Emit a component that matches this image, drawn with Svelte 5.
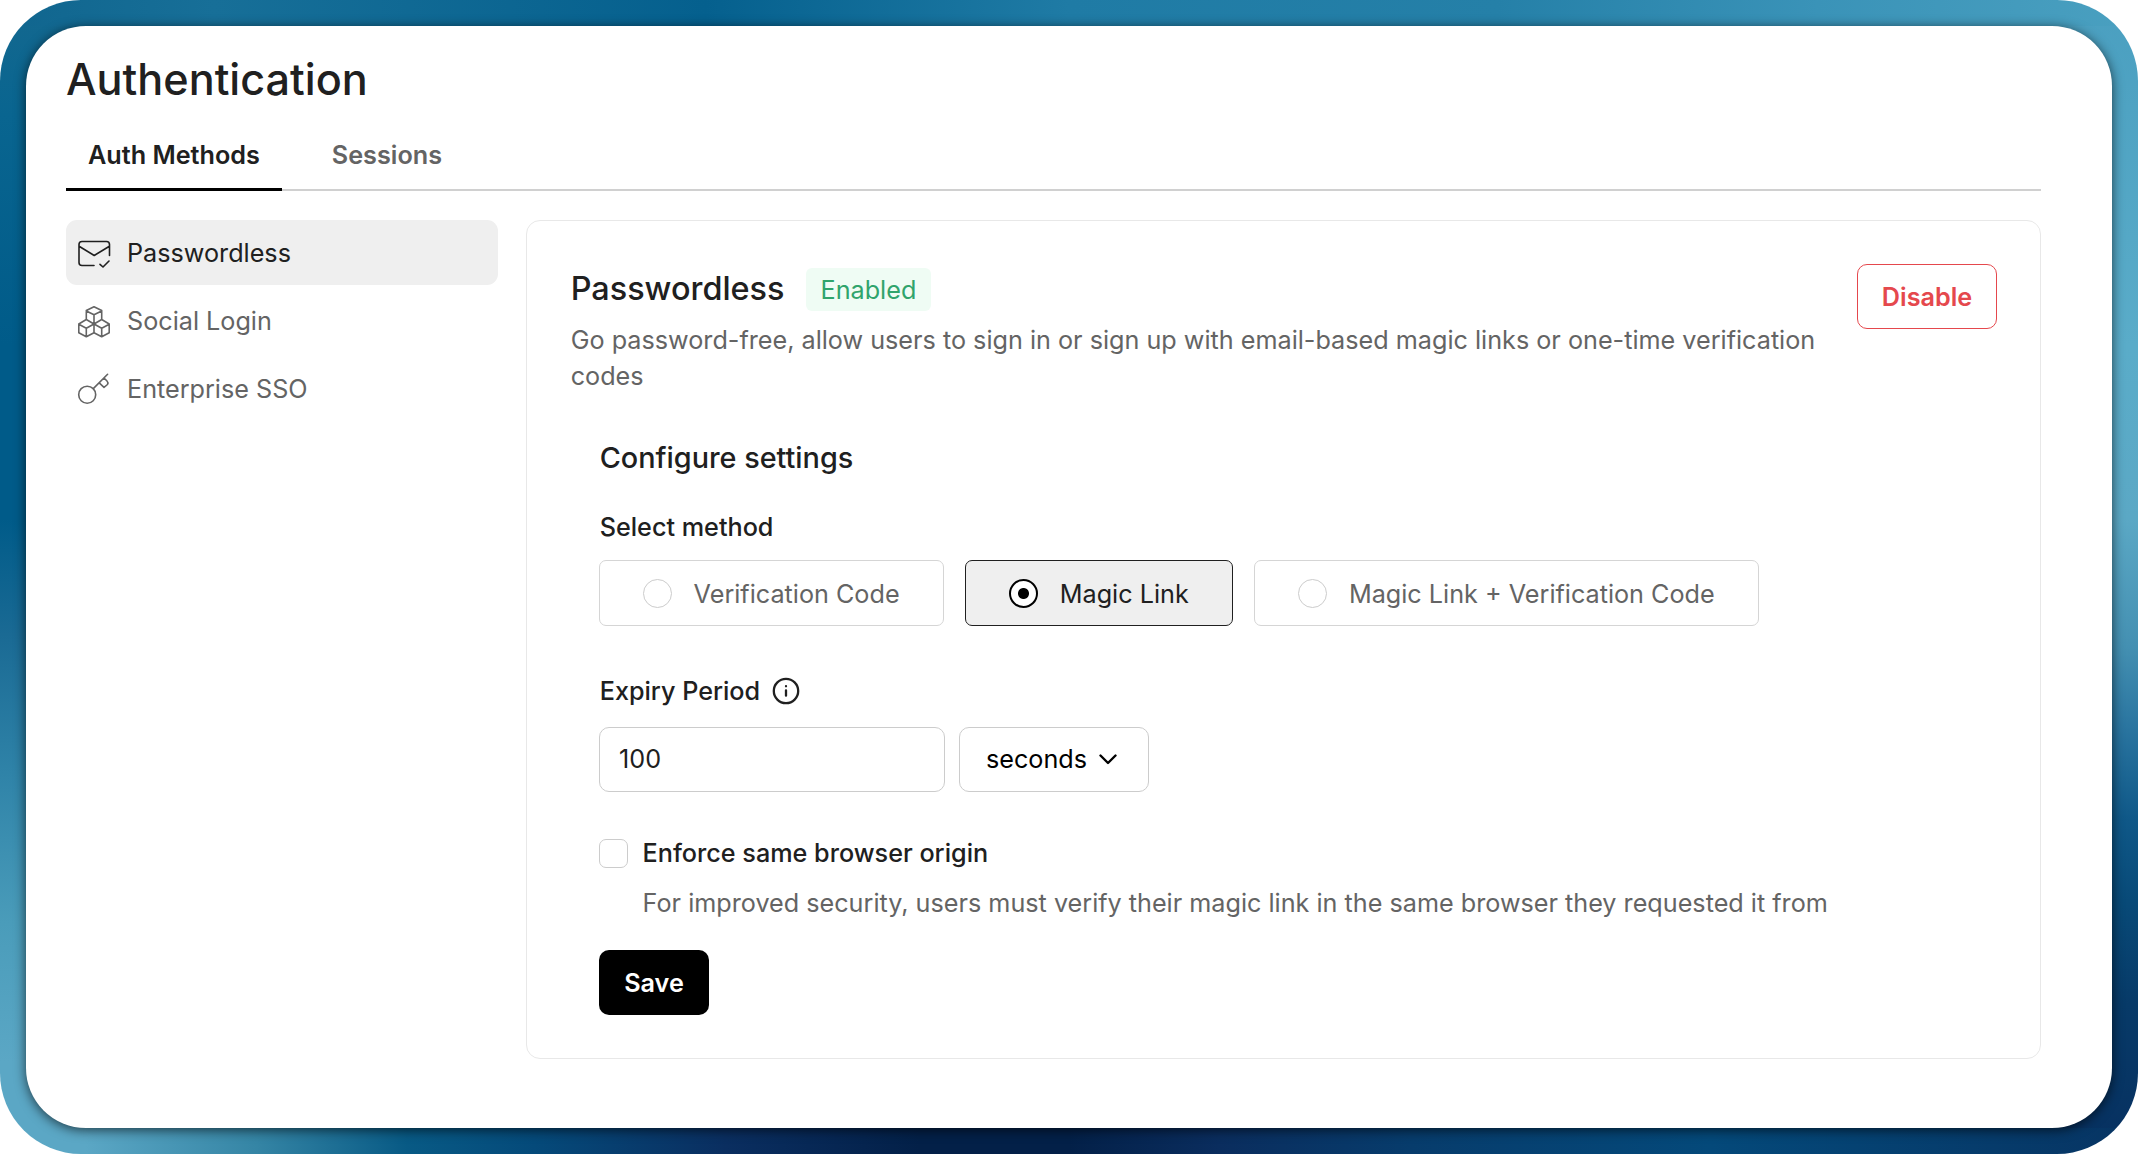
<script>
  const tabs = ['Auth Methods', 'Sessions'];
  const nav = ['Passwordless', 'Social Login', 'Enterprise SSO'];
  const methods = ['Verification Code', 'Magic Link', 'Magic Link + Verification Code'];
  let tab = $state(0);
  let section = $state(0);
  let method = $state(1);
  let expiry = $state('100');
  let enforce = $state(false);
</script>

<div class="frame">
  <div class="window">
    <h1>Authentication</h1>

    <div class="tabs">
      {#each tabs as name, i}
        <button class="tab" class:active={tab === i} onclick={() => (tab = i)}>{name}</button>
      {/each}
    </div>

    <div class="body">
      <nav>
        {#each nav as name, i}
          <button class="item" class:active={section === i} onclick={() => (section = i)}>
            <svg width="34" height="34" viewBox="0 0 34 34" fill="none" stroke="currentColor" stroke-width="1.6" stroke-linecap="round" stroke-linejoin="round">
              {#if i === 0}
                <path d="M17 29.500H5Q2 29.500 2 26.500V8.500Q2 5.500 5 5.500H29.500Q32.500 5.500 32.500 8.500V19.500M2.500 10.500L17.200 19.500L32 10.500M23 28.300L26 31L32 25" />
              {:else if i === 1}
                <path d="M17 2.800L24.700 6.500V15.500L17 20L9.300 15.500V6.500ZM9.300 7L17 10.800L24.700 7M17 10.800V28.800M9.300 15.500L17 20V28.800L9.300 32.800L1.800 28.800V20ZM1.800 20.300L9.300 24.200L17 20L24.700 24.200L32.200 20.300M9.300 24.200V32.800M24.700 15.500L32.200 20V28.800L24.700 32.800L17 28.800M24.700 24.200V32.800" />
              {:else}
                <circle cx="10.200" cy="22.700" r="8.500" />
                <path d="M16.300 16.600L30.600 2.300M22.200 10.800L27 15.300L30.500 12.500Q31.500 10.500 30 9L27 6" />
              {/if}
            </svg>
            <span>{name}</span>
          </button>
        {/each}
      </nav>

      <section class="panel">
        <header>
          <div class="intro">
            <div class="title"><h2>Passwordless</h2><span class="badge">Enabled</span></div>
            <p>Go password-free, allow users to sign in or sign up with email-based magic links or one-time verification codes</p>
          </div>
          <button class="disable">Disable</button>
        </header>

        <div class="settings">
          <h3>Configure settings</h3>
          <h4 class="select">Select method</h4>
          <div class="methods">
            {#each methods as name, i}
              <button class="method" class:active={method === i} onclick={() => (method = i)}>
                <span class="radio"></span><span class="name">{name}</span>
              </button>
            {/each}
          </div>

          <h4 class="expiry">
            <span>Expiry Period</span>
            <svg width="28" height="28" viewBox="0 0 28 28" fill="none" stroke="currentColor" stroke-width="2.300" stroke-linecap="round">
              <circle cx="14" cy="14" r="12.200" /><path d="M14 13.300V18.700M14 9.200V9.300" />
            </svg>
          </h4>
          <div class="period">
            <input bind:value={expiry} aria-label="Expiry Period" />
            <button class="unit">
              <span>seconds</span>
              <svg width="20" height="14" viewBox="0 0 20 14" fill="none" stroke="currentColor" stroke-width="2.400" stroke-linecap="round" stroke-linejoin="round"><path d="M2.500 3.500L10 11L17.500 3.500" /></svg>
            </button>
          </div>

          <div class="check">
            <input type="checkbox" id="enforce" bind:checked={enforce} />
            <label for="enforce">Enforce same browser origin</label>
          </div>
          <p class="hint">For improved security, users must verify their magic link in the same browser they requested it from</p>
          <button class="save">Save</button>
        </div>
      </section>
    </div>
  </div>
</div>

<style>
  :global(body) { background: #fff; }
  * { box-sizing: border-box; margin: 0; }
  .frame {
    height: 1154px;
    padding: 26px;
    border-radius: 81px;
    overflow: hidden;
    font-family: Inter, sans-serif;
    font-size: 25.2px;
    line-height: 36px;
    color: #202020;
    background:
      linear-gradient(90deg, #10658e, #176f98 10%, #05608e 33%, #1f7ba5 50%, #2580a8 70%, #3a93b8 85%, #4aa0c0) top / 100% 26px no-repeat,
      linear-gradient(90deg, #5ba7c5 4%, #3585a5 12%, #085a85 19%, #054a7a 25%, #0a2e60 34%, #032048 43%, #032048 50%, #0a2d5e 57%, #073c6c 66%, #04497a 80%, #073463) bottom / 100% 26px no-repeat,
      linear-gradient(#14688f, #096590 10%, #005b89 30%, #005b89 45%, #1a6a94 55%, #2f83a8 67%, #4a9cba 80%, #5ba7c5 92%) left / 50% 100% no-repeat,
      linear-gradient(#4a9fc0, #5aacc9 30%, #5ba8c5 45%, #4490b2 56%, #2a75a0 63%, #0f5888 71%, #084a78 78%, #073a68 87%, #073060) right / 50% 100% no-repeat;
  }
  .window {
    height: 1102px;
    padding: 25px 71px 0 40px;
    border-radius: 60px;
    background: #fff;
    box-shadow: 0 2px 12px rgb(0 0 0 / 65%);
  }
  button, input { font: inherit; color: inherit; }
  button { border: 0; padding: 0; background: none; }
  h1 { height: 57px; font-size: 43.2px; line-height: 56px; font-weight: 500; }
  .tabs { display: flex; gap: 28px; height: 83px; border-bottom: 2px solid #d0d0d0; }
  .tab { height: 83px; padding: 14px 22px 0; color: #646464; font-weight: 600; border-bottom: 3px solid transparent; }
  .tab.active { color: #202020; border-color: #000; }
  .body { display: flex; gap: 28px; margin-top: 29px; }
  nav { display: flex; flex-direction: column; gap: 3px; width: 432px; }
  .item { display: flex; align-items: center; gap: 16px; height: 65px; padding: 0 11px; border-radius: 11px; color: #646464; }
  .item.active { color: #202020; background: #efefef; }
  .panel { flex: 1; height: 839px; padding: 43px; border: 1px solid #e8e8e8; border-radius: 14px; }
  header { display: flex; justify-content: space-between; height: 130px; }
  .intro { width: 1270px; padding-left: 0.7px; }
  .title { display: flex; gap: 21.5px; padding-top: 4px; }
  h2 { font-size: 32.4px; line-height: 41px; font-weight: 500; }
  .badge { height: 43px; padding: 4px 14.5px; border-radius: 6px; background: #effcf4; color: #30a46c; }
  .intro p { margin-top: 11px; color: #646464; }
  .disable { width: 140px; height: 65px; border: 1px solid #e5484d; border-radius: 10px; color: #e5484d; font-weight: 600; }
  .settings { display: flex; flex-direction: column; align-items: flex-start; padding: 45px 28px 0 29px; }
  h3 { padding-left: 0.7px; font-size: 28.8px; line-height: 38px; font-weight: 500; }
  h4 { padding-left: 0.7px; font-size: 25.2px; font-weight: 500; }
  .select { margin-top: 32px; }
  .methods { display: flex; gap: 21.6px; margin-top: 15px; }
  .method { display: flex; align-items: center; gap: 21.6px; height: 66px; padding: 0 43px; border: 1px solid #d5d5d5; border-radius: 7px; color: #646464; }
  .method.active { color: #202020; background: #efefef; border-color: #202020; }
  .name { margin-top: 1px; }
  .radio { width: 29px; height: 29px; border: 1px solid #ccc; border-radius: 50%; background: #fff; }
  .active .radio { border: 2px solid #000; background: radial-gradient(circle, #000 5px, #fff 6px); }
  .expiry { display: flex; align-items: center; gap: 11.5px; margin-top: 47px; }
  .period { display: flex; gap: 14px; margin-top: 18px; }
  .period input { width: 346px; height: 65px; padding: 0 19px 2px; border: 1px solid #ccc; border-radius: 10px; outline: 0; }
  .unit { display: flex; align-items: center; justify-content: center; gap: 11px; width: 190px; height: 65px; padding: 0 4px 2px 0; border: 1px solid #ccc; border-radius: 10px; color: #000; }
  .check { display: flex; align-items: center; gap: 14.6px; margin-top: 43px; font-weight: 500; }
  .check input { width: 29px; height: 29px; appearance: none; border: 1px solid #ccc; border-radius: 7px; background: #fff; }
  .hint { margin: 14px 0 0 43.6px; color: #646464; white-space: nowrap; }
  .save { width: 110px; height: 65px; margin-top: 29px; border-radius: 10px; background: #000; color: #fff; font-weight: 600; }
</style>
